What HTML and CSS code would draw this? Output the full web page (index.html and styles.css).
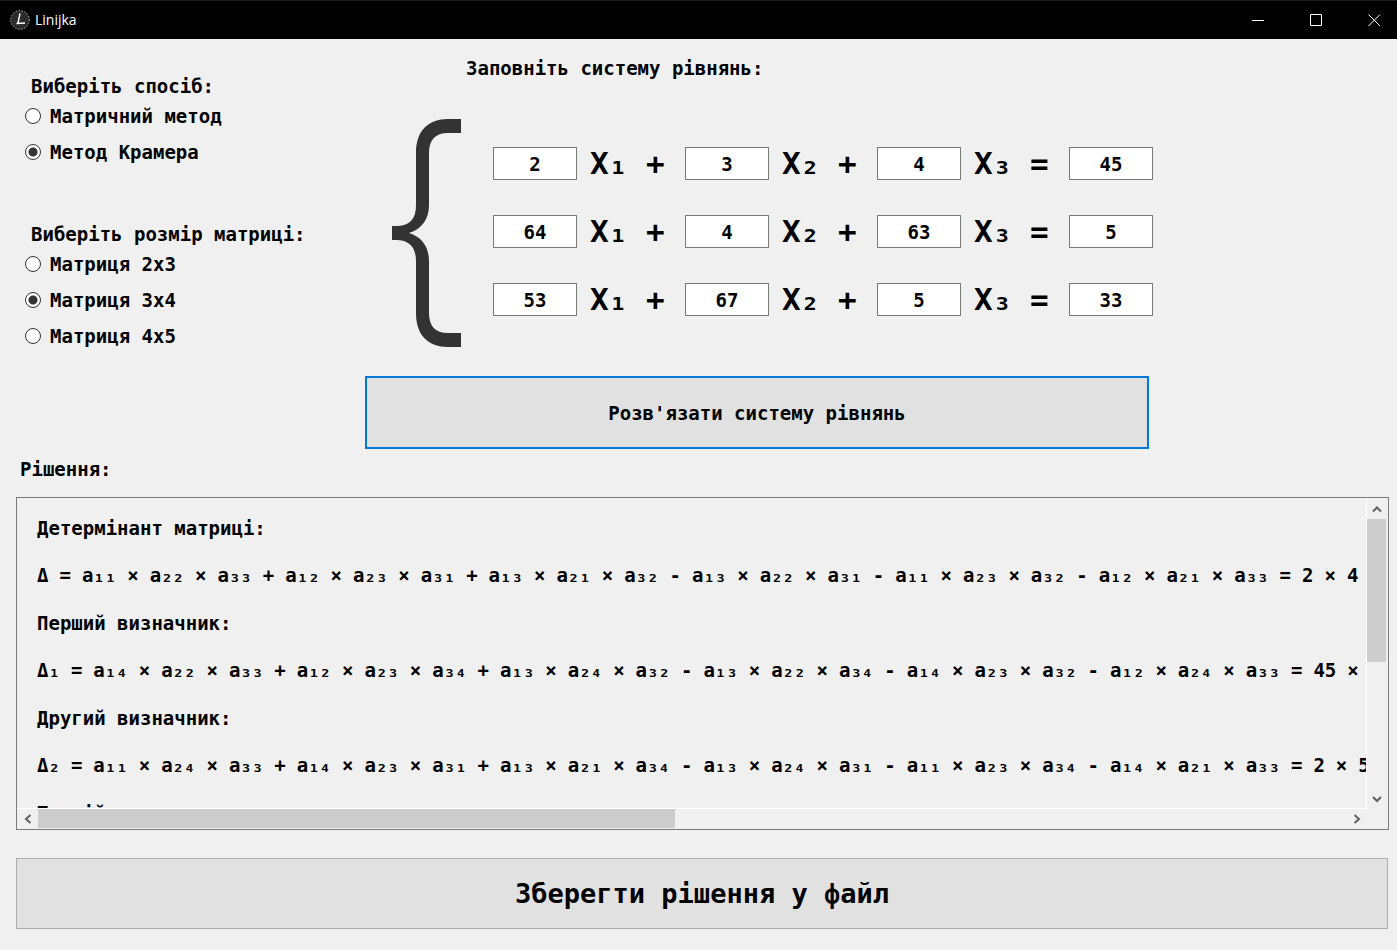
FILE: index.html
```html
<!DOCTYPE html>
<html lang="uk">
<head>
<meta charset="utf-8">
<title>Linijka</title>
<link rel="stylesheet" href="styles.css">
</head>
<body>
<header class="titlebar">
  <svg class="logo" viewBox="0 0 20 20" aria-hidden="true"><circle cx="10" cy="10" r="9.300" fill="#2b2b2b" stroke="#b5b5b5" stroke-width="1" stroke-dasharray="1.500 1.500"/><path d="M10 3.500 8 13M6.500 13.500l8.500-.5" fill="none" stroke="#fff" stroke-width="1.400"/></svg>
  <h1 class="title">Linijka</h1>
  <div class="controls">
    <button class="control" aria-label="Згорнути"><svg viewBox="0 0 13 13"><path d="M0 6.500h12" /></svg></button>
    <button class="control" aria-label="Розгорнути"><svg viewBox="0 0 13 13"><path d="M.5.5h11v11H.5z"/></svg></button>
    <button class="control" aria-label="Закрити"><svg viewBox="0 0 13 13"><path d="M.5.5l11.500 11.500M12 .5.5 12"/></svg></button>
  </div>
</header>
<main class="window">
  <div class="setup">
    <form class="options">
      <fieldset class="group">
        <legend class="legend">Виберіть спосіб:</legend>
        <label class="choice"><input class="radio" type="radio" name="method">Матричний метод</label>
        <label class="choice"><input class="radio" type="radio" name="method" checked>Метод Крамера</label>
      </fieldset>
      <fieldset class="group">
        <legend class="legend">Виберіть розмір матриці:</legend>
        <label class="choice"><input class="radio" type="radio" name="size">Матриця 2x3</label>
        <label class="choice"><input class="radio" type="radio" name="size" checked>Матриця 3x4</label>
        <label class="choice"><input class="radio" type="radio" name="size">Матриця 4x5</label>
      </fieldset>
    </form>
    <section class="system">
      <h2 class="system-title">Заповніть систему рівнянь:</h2>
      <div class="equations">
        <svg class="brace" viewBox="0 0 69 228" aria-hidden="true"><path fill="#333" d="M69 0H56C36 0 24 12 24 34V86C24 100 18 107 4 107H0V121H4C18 121 24 129 24 142V194C24 216 36 228 56 228H69V214H56C43 214 37 207 37 194V142C37 128 30 118 17 114C30 110 37 100 37 86V34C37 21 43 14 56 14H69Z"/></svg>
        <div class="rows">
          <div class="row">
            <input class="cell" id="a11" value="2"><label class="term" for="a11">X₁ +</label>
            <input class="cell" id="a12" value="3"><label class="term" for="a12">X₂ +</label>
            <input class="cell" id="a13" value="4"><label class="term" for="a13">X₃ =</label>
            <input class="cell" value="45" aria-label="b1">
          </div>
          <div class="row">
            <input class="cell" id="a21" value="64"><label class="term" for="a21">X₁ +</label>
            <input class="cell" id="a22" value="4"><label class="term" for="a22">X₂ +</label>
            <input class="cell" id="a23" value="63"><label class="term" for="a23">X₃ =</label>
            <input class="cell" value="5" aria-label="b2">
          </div>
          <div class="row">
            <input class="cell" id="a31" value="53"><label class="term" for="a31">X₁ +</label>
            <input class="cell" id="a32" value="67"><label class="term" for="a32">X₂ +</label>
            <input class="cell" id="a33" value="5"><label class="term" for="a33">X₃ =</label>
            <input class="cell" value="33" aria-label="b3">
          </div>
        </div>
      </div>
      <button class="solve">Розв'язати систему рівнянь</button>
    </section>
  </div>
  <h2 class="result-title">Рішення:</h2>
  <section class="result">
    <div class="output">
      <p class="caption">Детермінант матриці:</p>
      <p class="formula"><span>Δ</span> <span>=</span>
        <span>a₁₁</span> <span>×</span> <span>a₂₂</span> <span>×</span> <span>a₃₃</span> <span>+</span>
        <span>a₁₂</span> <span>×</span> <span>a₂₃</span> <span>×</span> <span>a₃₁</span> <span>+</span>
        <span>a₁₃</span> <span>×</span> <span>a₂₁</span> <span>×</span> <span>a₃₂</span> <span>-</span>
        <span>a₁₃</span> <span>×</span> <span>a₂₂</span> <span>×</span> <span>a₃₁</span> <span>-</span>
        <span>a₁₁</span> <span>×</span> <span>a₂₃</span> <span>×</span> <span>a₃₂</span> <span>-</span>
        <span>a₁₂</span> <span>×</span> <span>a₂₁</span> <span>×</span> <span>a₃₃</span> <span>=</span>
        <span>2</span> <span>×</span> <span>4</span></p>
      <p class="caption">Перший визначник:</p>
      <p class="formula"><span>Δ₁</span> <span>=</span>
        <span>a₁₄</span> <span>×</span> <span>a₂₂</span> <span>×</span> <span>a₃₃</span> <span>+</span>
        <span>a₁₂</span> <span>×</span> <span>a₂₃</span> <span>×</span> <span>a₃₄</span> <span>+</span>
        <span>a₁₃</span> <span>×</span> <span>a₂₄</span> <span>×</span> <span>a₃₂</span> <span>-</span>
        <span>a₁₃</span> <span>×</span> <span>a₂₂</span> <span>×</span> <span>a₃₄</span> <span>-</span>
        <span>a₁₄</span> <span>×</span> <span>a₂₃</span> <span>×</span> <span>a₃₂</span> <span>-</span>
        <span>a₁₂</span> <span>×</span> <span>a₂₄</span> <span>×</span> <span>a₃₃</span> <span>=</span>
        <span>45</span> <span>×</span> <span>4</span></p>
      <p class="caption">Другий визначник:</p>
      <p class="formula"><span>Δ₂</span> <span>=</span>
        <span>a₁₁</span> <span>×</span> <span>a₂₄</span> <span>×</span> <span>a₃₃</span> <span>+</span>
        <span>a₁₄</span> <span>×</span> <span>a₂₃</span> <span>×</span> <span>a₃₁</span> <span>+</span>
        <span>a₁₃</span> <span>×</span> <span>a₂₁</span> <span>×</span> <span>a₃₄</span> <span>-</span>
        <span>a₁₃</span> <span>×</span> <span>a₂₄</span> <span>×</span> <span>a₃₁</span> <span>-</span>
        <span>a₁₁</span> <span>×</span> <span>a₂₃</span> <span>×</span> <span>a₃₄</span> <span>-</span>
        <span>a₁₄</span> <span>×</span> <span>a₂₁</span> <span>×</span> <span>a₃₃</span> <span>=</span>
        <span>2</span> <span>×</span> <span>5</span></p>
      <p class="caption">Третій визначник:</p>
    </div>
    <div class="vbar">
      <button class="arrow" aria-label="Вгору"><svg viewBox="0 0 10 10"><path d="M1 7.500 5 3.500l4 4"/></svg></button>
      <div class="track"><div class="thumb"></div></div>
      <button class="arrow" aria-label="Вниз"><svg viewBox="0 0 10 10"><path d="M1 3 5 7l4-4"/></svg></button>
    </div>
    <div class="hbar">
      <button class="arrow" aria-label="Вліво"><svg viewBox="0 0 10 10"><path d="M7.500 1 3 5l4.500 4"/></svg></button>
      <div class="track"><div class="thumb"></div></div>
      <button class="arrow" aria-label="Вправо"><svg viewBox="0 0 10 10"><path d="M2.500 1 7 5 2.500 9"/></svg></button>
    </div>
  </section>
  <button class="save">Зберегти рішення у файл</button>
</main>
</body>
</html>
```

FILE: styles.css
```css
* { box-sizing: border-box; }
body {
  margin: 0;
  min-height: 100vh;
  background: #f0f0f0;
  color: #000;
  font: bold 19px/24px "DejaVu Sans Mono", monospace;
}
h1, h2, p, fieldset { margin: 0; padding: 0; border: 0; font: inherit; }
button, input { margin: 0; font: inherit; color: inherit; border-radius: 0; }

.titlebar {
  display: flex;
  align-items: center;
  height: 39px;
  padding-left: 10px;
  background: #000;
  border-top: 1px solid #1c1c1c;
  color: #fff;
}
.logo { width: 20px; height: 20px; }
.title { margin-left: 5px; font: 14px/20px "Open Sans", "Noto Sans", sans-serif; }
.controls { display: flex; margin-left: auto; }
.control {
  display: flex;
  align-items: center;
  justify-content: center;
  width: 58px;
  height: 38px;
  padding: 0;
  border: 0;
  background: none;
}
.control:last-child { width: 46px; margin-left: 6px; }
.control svg { width: 13px; height: 13px; fill: none; stroke: #fff; }

.window { padding: 0 8px 20px 16px; }
.setup { display: grid; grid-template-columns: 349px 1fr; padding-right: 238px; }
.options { padding-top: 35px; }
.group + .group { margin-top: 52px; }
.legend { padding: 0 0 0 15px; }
.choice { display: flex; align-items: center; height: 36px; padding-left: 9px; }
.radio {
  appearance: none;
  width: 16px;
  height: 16px;
  margin-right: 9px;
  border: 1px solid #333;
  border-radius: 50%;
  background: #fff;
}
.radio:checked { background: radial-gradient(circle, #333 4px, #fff 5px); }

.system { min-width: 0; }
.system-title { padding: 17px 0 0 101px; }
.equations { display: flex; padding: 39px 0 0 27px; }
.brace { flex: none; width: 69px; height: 228px; }
.rows { flex: none; display: grid; gap: 35px; align-content: start; padding: 28px 0 0 32px; }
.row { display: flex; align-items: center; height: 33px; }
.cell {
  width: 84px;
  height: 33px;
  padding: 0;
  border: 1px solid #7a7a7a;
  background: #fff;
  text-align: center;
}
.term { width: 108px; padding-left: 13px; font-size: 31px; line-height: 33px; white-space: pre; }
.solve {
  width: calc(100% - 2px);
  height: 73px;
  margin-top: 29px;
  border: 2px solid #0078d7;
  background: #e1e1e1;
}

.result-title { padding: 8px 0 0 4px; }
.result {
  display: grid;
  grid-template-columns: minmax(0, 1fr) 21px;
  grid-template-rows: 311px 20px;
  margin-top: 16px;
  border: 1px solid #7a7a7a;
}
.output {
  overflow: hidden;
  padding: 6px 0 0 20px;
  border: solid #fff;
  border-width: 0 1px 1px 0;
  white-space: nowrap;
}
.caption { line-height: 48px; }
.formula { display: flex; gap: 11px; line-height: 47px; }
.vbar { display: flex; flex-direction: column; padding-right: 2px; }
.hbar { display: flex; padding-bottom: 1px; }
.track { flex: 1; }
.thumb { background: #cdcdcd; }
.vbar .thumb { height: 53%; }
.hbar .thumb { width: 48.7%; height: 100%; }
.arrow {
  display: flex;
  flex: none;
  align-items: center;
  justify-content: center;
  width: 21px;
  height: 21px;
  padding: 0;
  border: 0;
  background: none;
}
.vbar .arrow { width: 19px; }
.hbar .arrow { height: 19px; }
.arrow svg { width: 10px; height: 10px; fill: none; stroke: #606060; stroke-width: 2; }
.save {
  display: block;
  width: calc(100% - 1px);
  height: 71px;
  margin-top: 28px;
  border: 1px solid #adadad;
  background: #e1e1e1;
  font-size: 27px;
}
```
